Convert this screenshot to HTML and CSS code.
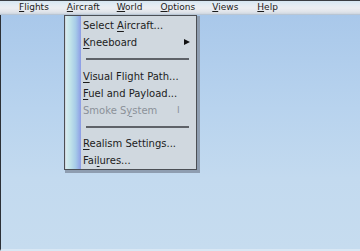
FILE: index.html
```html
<!DOCTYPE html>
<html>
<head>
<meta charset="utf-8">
<link rel="stylesheet" href="styles.css">
</head>
<body>
<div class="screen">
  <div class="menubar">
    <span class="mb-item mb-flights"><u>F</u>lights</span>
    <span class="mb-item mb-aircraft"><u>A</u>ircraft</span>
    <span class="mb-item mb-world"><u>W</u>orld</span>
    <span class="mb-item mb-options"><u>O</u>ptions</span>
    <span class="mb-item mb-views"><u>V</u>iews</span>
    <span class="mb-item mb-help"><u>H</u>elp</span>
  </div>
  <div class="desktop"></div>
  <div class="menu">
    <div class="stripe"></div>
    <div class="items">
      <div class="item">Select <u>A</u>ircraft...</div>
      <div class="item"><u>K</u>neeboard<span class="arrow"></span></div>
      <div class="sep"><span></span></div>
      <div class="item"><u>V</u>isual Flight Path...</div>
      <div class="item"><u>F</u>uel and Payload...</div>
      <div class="item disabled">Smoke S<u>y</u>stem<span class="key">I</span></div>
      <div class="sep"><span></span></div>
      <div class="item"><u>R</u>ealism Settings...</div>
      <div class="item">Fai<u>l</u>ures...</div>
    </div>
  </div>
</div>
</body>
</html>
```

FILE: styles.css
```css
html, body {
  margin: 0;
  padding: 0;
}
body {
  width: 360px;
  height: 251px;
  overflow: hidden;
  font-family: "DejaVu Sans", Verdana, sans-serif;
  color: #1c1c1c;
}
.screen {
  position: relative;
  width: 360px;
  height: 251px;
  display: flex;
  flex-direction: column;
}
.menubar {
  height: 13px;
  border-top: 1px solid #3a3d42;
  border-bottom: 1px solid #b9c6d4;
  background: linear-gradient(#d6e6f2 0%, #e4ecf3 30%, #eceef2 55%, #dfe3e9 85%, #cdd6e0 100%);
  display: flex;
  align-items: center;
  font-size: 9px;
  line-height: 13px;
}
.mb-item {
  position: relative;
  display: block;
}
.mb-item u {
  text-underline-offset: 1px;
}
.mb-flights { margin-left: 19px; }
.mb-aircraft { margin-left: 18px; }
.mb-world { margin-left: 17px; }
.mb-options { margin-left: 18px; }
.mb-views { margin-left: 17px; }
.mb-help { margin-left: 19px; }
.desktop {
  flex: 1;
  border-left: 1px solid #2c3036;
  border-bottom: 2px solid #d9e7f4;
  background: linear-gradient(#a9c8ea 0%, #b8d3ee 40%, #c3daef 70%, #c6dcef 100%);
}
.menu {
  position: absolute;
  left: 64px;
  top: 15px;
  width: 131px;
  height: 153px;
  border: 1px solid #4b4f55;
  background: #d0d8df;
  box-shadow: 2px 2px 0 1px #8e9db0;
  display: flex;
}
.stripe {
  width: 15px;
  margin-left: 1px;
  background: linear-gradient(90deg, #d6ecef 0%, #c0e2e9 30%, #a6cbe8 65%, #8d9ce6 100%);
}
.items {
  flex: 1;
  padding-left: 2px;
  padding-top: 1px;
  display: flex;
  flex-direction: column;
}
.item {
  height: 17px;
  line-height: 17px;
  font-size: 10px;
  position: relative;
  white-space: nowrap;
}
.item u {
  text-underline-offset: 2px;
}
.item.disabled {
  color: #8b9199;
}
.key {
  position: absolute;
  left: 94px;
  top: 0;
  font-size: 9px;
}
.arrow {
  position: absolute;
  left: 101px;
  top: 5px;
  width: 0;
  height: 0;
  border-top: 3.5px solid transparent;
  border-bottom: 3.5px solid transparent;
  border-left: 6px solid #111;
}
.sep {
  height: 17px;
  display: flex;
  align-items: center;
  padding-left: 3px;
  padding-right: 7px;
}
.sep span {
  display: block;
  flex: 1;
  height: 2px;
  background: #5e6268;
}
```
